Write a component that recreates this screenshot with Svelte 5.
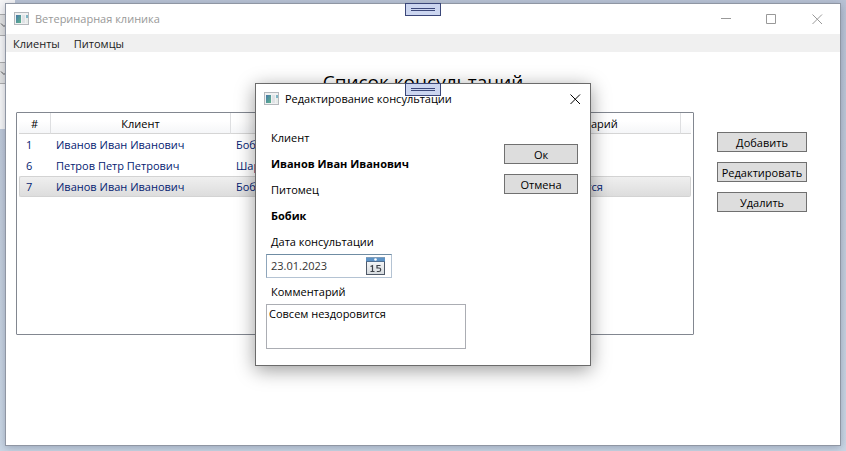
<script>
  const menu = ['Клиенты', 'Питомцы'];
  const columns = ['#', 'Клиент', 'Питомец', 'Дата', 'Комментарий', ''];
  const actions = ['Добавить', 'Редактировать', 'Удалить'];
  const rows = [
    { id: 1, client: 'Иванов Иван Иванович', pet: 'Бобик', date: '', note: '' },
    { id: 6, client: 'Петров Петр Петрович', pet: 'Шарик', date: '', note: '' },
    { id: 7, client: 'Иванов Иван Иванович', pet: 'Бобик', date: '', note: 'Совсем нездоровится' }
  ];
  let selected = $state(7);
  let date = $state('23.01.2023');
  let comment = $state('Совсем нездоровится');
</script>

{#snippet appIcon()}
  <svg class="app-icon" width="16" height="14" viewBox="0 0 16 14" aria-hidden="true">
    <defs>
      <linearGradient id="pane" x1="0" y1="0" x2="1" y2="1">
        <stop offset="0" stop-color="#4879a8" />
        <stop offset="1" stop-color="#5fb58c" />
      </linearGradient>
    </defs>
    <rect x="0.5" y="0.5" width="14" height="12" fill="#f0f1f2" stroke="#b4b8bc" />
    <rect x="2" y="3" width="5" height="8" fill="url(#pane)" />
    <rect x="8" y="3" width="3" height="8" fill="#dfe2e5" />
    <rect x="12" y="3" width="2" height="3" fill="#7fb4c4" />
    <rect x="12" y="6" width="2" height="5" fill="#e6ece9" />
  </svg>
{/snippet}

{#snippet cross()}
  <svg width="11" height="11" viewBox="0 0 11 11" aria-hidden="true">
    <path d="M.5 .5l9.500 9.500M10 .5l-9.500 9.500" stroke="currentColor" fill="none" />
  </svg>
{/snippet}

{#snippet grip()}
  <span class="grip" aria-hidden="true"><i></i></span>
{/snippet}

<div class="desktop">
  <div class="behind" aria-hidden="true">
    {#each [0, 1] as n (n)}
      <i><svg width="8" height="5" viewBox="0 0 8 5"><path d="M1 .5l3 3 3-3" fill="none" stroke="#555" /></svg></i>
    {/each}
  </div>

  <main class="window">
    {@render grip()}
    <header class="titlebar">
      {@render appIcon()}
      <span class="title">Ветеринарная клиника</span>
      <button class="caption" aria-label="Свернуть">
        <svg width="11" height="11" viewBox="0 0 11 11"><path d="M1 4.500h10" stroke="currentColor" /></svg>
      </button>
      <button class="caption" aria-label="Развернуть">
        <svg width="11" height="11" viewBox="0 0 11 11"><path d="M.5 .5h9v9h-9z" stroke="currentColor" fill="none" /></svg>
      </button>
      <button class="caption" aria-label="Закрыть">{@render cross()}</button>
    </header>
    <nav>
      {#each menu as item}<button>{item}</button>{/each}
    </nav>
    <h1>Список консультаций</h1>
    <section class="content">
      <div class="list">
        <table>
          <colgroup>
            <col class="c-id" /><col class="c-client" /><col class="c-pet" /><col class="c-date" /><col class="c-note" /><col />
          </colgroup>
          <thead>
            <tr>{#each columns as c}<th scope="col">{c}</th>{/each}</tr>
          </thead>
          <tbody>
            {#each rows as r}
              <tr class:selected={r.id === selected} onclick={() => (selected = r.id)}>
                <td>{r.id}</td><td>{r.client}</td><td>{r.pet}</td><td>{r.date}</td><td>{r.note}</td><td></td>
              </tr>
            {/each}
          </tbody>
        </table>
      </div>
      <div class="actions">
        {#each actions as a}<button class="btn">{a}</button>{/each}
      </div>
    </section>
  </main>

  <div class="dialog" role="dialog" aria-labelledby="dlg-title">
    {@render grip()}
    <header class="titlebar">
      {@render appIcon()}
      <span class="title" id="dlg-title">Редактирование консультации</span>
      <button class="caption" aria-label="Закрыть">{@render cross()}</button>
    </header>
    <div class="body">
      <div class="fields">
        <span class="label">Клиент</span>
        <b class="label">Иванов Иван Иванович</b>
        <span class="label">Питомец</span>
        <b class="label">Бобик</b>
        <label class="label" for="date">Дата консультации</label>
        <div class="datepicker">
          <input id="date" type="text" bind:value={date} />
          <button aria-label="Открыть календарь">
            <svg width="20" height="18" viewBox="0 0 20 18" aria-hidden="true">
              <defs>
                <linearGradient id="sheet" x1="0" y1="0" x2="0" y2="1">
                  <stop offset="0" stop-color="#fff" />
                  <stop offset="1" stop-color="#d5dade" />
                </linearGradient>
              </defs>
              <rect x="0.5" y="0.5" width="18" height="17" fill="url(#sheet)" stroke="#4f5968" />
              <rect x="0" y="0" width="19" height="4" fill="#5d93c6" />
              <rect x="0" y="0" width="19" height="1" fill="#7f9dba" />
              <rect x="0" y="4" width="19" height="1" fill="#4f6f92" />
              <circle cx="9.5" cy="2.5" r="1.3" fill="#fff" />
              <path d="M4.500 9.500l2-.8v6M4.500 14.500h4" fill="none" stroke="#3e4249" stroke-width="1.200" />
              <path d="M14.500 8.500h-3.500v2.500h2q1.700 0 1.700 1.700 0 1.800-1.900 1.800h-2" fill="none" stroke="#3e4249" stroke-width="1.200" />
            </svg>
          </button>
        </div>
        <label class="label" for="comment">Комментарий</label>
        <textarea id="comment" bind:value={comment}></textarea>
      </div>
      <div class="confirm">
        <button class="btn">Ок</button>
        <button class="btn">Отмена</button>
      </div>
    </div>
  </div>
</div>

<style>
  :global(body) { margin: 0; }
  .desktop, .desktop * { box-sizing: border-box; }
  .desktop {
    position: relative;
    display: flex;
    min-height: 100vh;
    padding: 3px 5px 5px;
    overflow: hidden;
    background: linear-gradient(#b9c3d5, #c3cddc 50%, #cbd8e6);
    font: 11px/16px "Open Sans", "Noto Sans", sans-serif;
    color: #000;
  }
  button, input, textarea { font: inherit; color: inherit; }
  button { display: flex; align-items: center; justify-content: center; padding: 0; border: 0; background: none; }

  .behind {
    position: absolute;
    inset: 0 auto auto 0;
    width: 15px;
    height: 129px;
    padding-top: 14px;
    background: #f6f6f7;
  }
  .behind i {
    display: flex;
    align-items: center;
    height: 22px;
    margin-bottom: 26px;
    border: solid #acacac;
    border-width: 1px 0;
    background: #e3e3e3;
  }

  .window {
    position: relative;
    flex: 1;
    border: 1px solid #8f96a3;
    background: #fff;
    box-shadow: 0 2px 8px rgb(40 50 80 / 30%);
  }
  .titlebar { display: flex; align-items: center; height: 30px; padding-left: 8px; }
  .app-icon { margin-right: 5px; }
  .title { flex: 1; white-space: nowrap; }
  .window .titlebar { color: #999; }
  .caption { width: 46px; height: 30px; }
  .dialog .caption { width: 30px; }

  .grip {
    position: absolute;
    top: -1px;
    left: 50%;
    width: 36px;
    height: 13px;
    margin-left: -18px;
    padding: 4px 5px;
    border: 1px solid #3b4779;
    background: #ccd6f0;
  }
  .grip i { display: block; height: 3px; border: solid #3b4779; border-width: 1px 0; }

  nav { display: flex; gap: 14px; height: 18px; padding: 2px 7px 0; background: #f0f0f0; color: #212121; }

  h1 { margin: 16px 0; font-size: 19px; line-height: 28px; font-weight: 400; text-align: center; }
  .content { display: flex; gap: 23px; padding: 0 33px 10px 10px; }
  .list { flex: 1; min-width: 0; min-height: 223px; padding: 0 2px; border: 1px solid #828790; border-radius: 1px; }
  table { width: 100%; table-layout: fixed; border-spacing: 0; }
  .c-id { width: 32px; }
  .c-client { width: 180px; }
  .c-pet { width: 120px; }
  .c-date { width: 130px; }
  .c-note { width: 200px; }
  th {
    height: 21px;
    padding: 1px 0 0;
    border-right: 1px solid #dedfe1;
    border-bottom: 1px solid #d5d5d5;
    background: linear-gradient(#fff 40%, #f5f6f8);
    font-weight: 400;
  }
  th:last-child { border-right: 0; }
  td {
    height: 21px;
    padding: 1px 5px 0;
    border: solid transparent;
    border-width: 1px 0;
    color: #042271;
    white-space: nowrap;
  }
  td:first-child { padding-left: 7px; }
  .selected td { border-color: #d3d3d3; background: linear-gradient(#f0f0f0, #dcdcdc) border-box; }
  .selected td:first-child { padding-left: 6px; border-left: 1px solid #d3d3d3; border-radius: 2px 0 0 2px; }
  .selected td:last-child { border-right: 1px solid #d3d3d3; border-radius: 0 2px 2px 0; }

  .actions, .confirm { display: flex; flex-direction: column; gap: 10px; padding-top: 20px; }
  .actions { width: 90px; }
  .confirm { width: 74px; }
  .btn { height: 20px; padding-top: 1px; border: 1px solid #707070; background: #ddd; white-space: nowrap; }

  .dialog {
    position: absolute;
    top: 83px;
    left: calc(50% - 168px);
    width: 336px;
    border: 1px solid #6b6b6b;
    background: #fff;
    box-shadow: 0 4px 18px rgb(0 0 0 / 40%);
  }
  .body { display: flex; justify-content: space-between; padding: 10px 12px 16px 10px; }
  .fields { display: flex; flex-direction: column; width: 200px; }
  .label { padding: 6px 5px 4px; }
  .datepicker {
    display: flex;
    align-items: center;
    width: 126px;
    height: 24px;
    padding: 0 5px 0 4px;
    border: 1px solid #abadb3;
    border-color: #6f8ca3 #b4c3d3 #b4c3d3 #8fa6bb;
  }
  .datepicker input { flex: 1; min-width: 0; padding: 0; border: 0; outline: 0; color: #333; background: none; }
  textarea {
    height: 45px;
    padding: 1px 2px;
    border: 1px solid #abadb3;
    border-radius: 0;
    outline: 0;
    resize: none;
    background: #fff;
  }
</style>
